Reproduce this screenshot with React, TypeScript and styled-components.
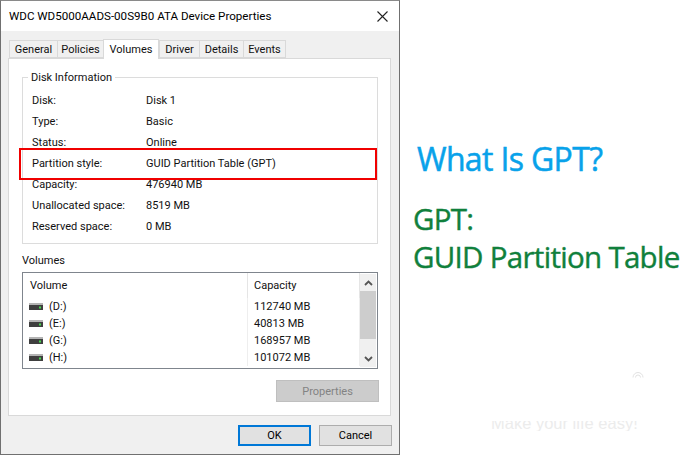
import React from "react";
import styled, { createGlobalStyle } from "styled-components";

const Global = createGlobalStyle`
  html, body {
    margin: 0;
    padding: 0;
    background: #fff;
    overflow: hidden;
  }
  * { box-sizing: border-box; }
`;

const Page = styled.div`
  width: 692px;
  height: 456px;
  display: flex;
  background: #fff;
  font-family: "Open Sans", "Noto Sans", sans-serif;
`;

// Dialog
const Dialog = styled.div`
  width: 400px;
  height: 455px;
  flex: none;
  display: flex;
  flex-direction: column;
  background: #f0f0f0;
  border: 1px solid #707070;
  border-top-color: #8a8a8a;
  color: #111;
  font-family: Roboto, "Noto Sans", sans-serif;
  font-size: 11px;
`;
const TitleBar = styled.div`
  height: 30px;
  flex: none;
  display: flex;
  align-items: center;
  justify-content: space-between;
  background: #fff;
  padding: 0 11px 0 8px;
  font-size: 11.6px;
  color: #000;
`;
const TabStrip = styled.div`
  height: 27px;
  flex: none;
  display: flex;
  align-items: flex-end;
  padding-left: 8px;
  position: relative;
  z-index: 1;
`;
const Tab = styled.div<{ $width: number; $active?: boolean }>`
  width: ${(p) => p.$width}px;
  height: ${(p) => (p.$active ? 20 : 18)}px;
  margin-bottom: ${(p) => (p.$active ? -1 : 0)}px;
  margin-right: ${(p) => (p.$active ? 0 : -1)}px;
  display: flex;
  align-items: center;
  justify-content: center;
  background: ${(p) => (p.$active ? "#fff" : "#f0f0f0")};
  border: 1px solid #d9d9d9;
  border-bottom: ${(p) => (p.$active ? "none" : "1px solid #d9d9d9")};
  padding-top: ${(p) => (p.$active ? 0 : 1)}px;
  padding-bottom: ${(p) => (p.$active ? 1 : 0)}px;
`;
const Panel = styled.div`
  height: 358px;
  flex: none;
  margin: 0 8px 0 7px;
  padding: 18px 12px 0 13px;
  background: #fff;
  border: 1px solid #d9d9d9;
`;
const GroupBox = styled.div`
  position: relative;
  height: 167px;
  padding: 12px 0 0 9px;
  border: 1px solid #dcdcdc;
`;
const Legend = styled.div`
  position: absolute;
  top: -7px;
  left: 5px;
  padding: 0 3px;
  background: #fff;
  line-height: 14px;
`;
const InfoRow = styled.div`
  height: 21px;
  display: grid;
  grid-template-columns: 114px 1fr;
  align-items: center;
`;
const Highlight = styled.div`
  position: absolute;
  left: -4px;
  top: 70px;
  width: 358px;
  height: 32px;
  border: 2px solid #f00000;
`;
const VolumesLabel = styled.div`
  margin-top: 9px;
  height: 16px;
  line-height: 16px;
`;
const ListBox = styled.div`
  height: 97px;
  margin-top: 3px;
  display: flex;
  background: #fff;
  border: 1px solid #7f858d;
`;
const ListBody = styled.div`
  flex: 1;
  min-width: 0;
`;
const ListHead = styled.div`
  height: 25px;
  display: grid;
  grid-template-columns: 224px 1fr;
  align-items: center;
`;
const HeadCell = styled.div<{ $divider?: boolean }>`
  height: 100%;
  display: flex;
  align-items: center;
  padding-left: ${(p) => (p.$divider ? 6 : 7)}px;
  padding-bottom: 1px;
  border-left: ${(p) => (p.$divider ? "1px solid #e5e5e5" : "none")};
  border-right: ${(p) => (p.$divider ? "1px solid #e5e5e5" : "none")};
`;
const ListRow = styled.div`
  height: 17px;
  display: grid;
  grid-template-columns: 224px 1fr;
  align-items: center;
`;
const VolumeCell = styled.div`
  display: flex;
  align-items: center;
  gap: 6px;
  padding-left: 6px;
`;
const CapacityCell = styled.div`
  height: 100%;
  display: flex;
  align-items: center;
  padding-left: 6px;
  border-left: 1px solid #eeeeee;
  border-right: 1px solid #eeeeee;
`;
const ScrollBar = styled.div`
  width: 16px;
  flex: none;
  margin: 1px 1px 1px 0;
  display: flex;
  flex-direction: column;
  background: #f0f0f0;
`;
const ScrollButton = styled.div`
  height: 17px;
  flex: none;
  display: flex;
  align-items: center;
  justify-content: center;
`;
const ScrollThumb = styled.div`
  height: 48px;
  flex: none;
  background: #cdcdcd;
`;
const ScrollTrack = styled.div`
  flex: 1;
`;
const ButtonRow = styled.div`
  display: flex;
  justify-content: flex-end;
`;
const PropertiesButton = styled.div`
  width: 103px;
  height: 22px;
  margin-top: 11px;
  margin-right: -1px;
  display: flex;
  align-items: center;
  justify-content: center;
  background: #cccccc;
  border: 1px solid #bfbfbf;
  color: #838383;
`;
const Footer = styled.div`
  flex: 1;
  display: flex;
  justify-content: flex-end;
  gap: 8px;
  padding: 9px 7px 0 0;
`;
const DialogButton = styled.div<{ $primary?: boolean }>`
  width: 73px;
  height: 21px;
  display: flex;
  align-items: center;
  justify-content: center;
  background: #e1e1e1;
  border: ${(p) => (p.$primary ? "2px solid #0078d7" : "1px solid #adadad")};
  color: #000;
`;

// Right side
const Side = styled.div`
  flex: 1;
  min-width: 0;
  display: flex;
  flex-direction: column;
  padding: 137px 0 0 13px;
  white-space: nowrap;
`;
const Heading = styled.div`
  margin-left: 4px;
  height: 44px;
  line-height: 44px;
  font-size: 32px;
  color: #08a2ea;
  letter-spacing: -0.65px;
  -webkit-text-stroke: 0.5px #08a2ea;
`;
const Subheading = styled.div`
  margin-top: 19px;
  font-size: 29.5px;
  line-height: 38px;
  color: #10803c;
  letter-spacing: -0.7px;
  -webkit-text-stroke: 0.4px #10803c;
`;
const Watermark = styled.div`
  position: relative;
  margin-top: 124px;
  height: 0;
`;
const MarkIcon = styled.svg`
  position: absolute;
  left: 219px;
  top: -30px;
`;
const FaintClip = styled.div`
  position: absolute;
  left: 78px;
  top: 21px;
  width: 150px;
  height: 10px;
  overflow: hidden;
`;
const FaintText = styled.div`
  margin-top: -7px;
  font-family: "Liberation Sans", sans-serif;
  font-size: 16.5px;
  line-height: 18px;
  color: #ececec;
`;

const CloseIcon = () => (
  <svg width="11" height="11" viewBox="0 0 11 11">
    <path d="M.5.5l10 10M10.5.5l-10 10" stroke="#222" strokeWidth="1.1" fill="none" />
  </svg>
);

const DriveIcon = () => (
  <svg width="14" height="7" viewBox="0 0 14 7">
    <rect x="0" y="0" width="14" height="2" fill="#b4b4b4" />
    <rect x="0" y="2" width="14" height="5" fill="#3f3f3f" />
    <rect x="10" y="3.5" width="2" height="2" fill="#47d94f" />
  </svg>
);

const Chevron = ({ up }: { up?: boolean }) => (
  <svg width="9" height="6" viewBox="0 0 9 6">
    <path
      d={up ? "M1 5l3.5-3.5L8 5" : "M1 1l3.5 3.5L8 1"}
      stroke="#555"
      strokeWidth="1.8"
      fill="none"
    />
  </svg>
);

const tabs = [
  { label: "General", width: 49 },
  { label: "Policies", width: 47 },
  { label: "Volumes", width: 56, active: true },
  { label: "Driver", width: 41 },
  { label: "Details", width: 45 },
  { label: "Events", width: 43 },
];

const info = [
  ["Disk:", "Disk 1"],
  ["Type:", "Basic"],
  ["Status:", "Online"],
  ["Partition style:", "GUID Partition Table (GPT)"],
  ["Capacity:", "476940 MB"],
  ["Unallocated space:", "8519 MB"],
  ["Reserved space:", "0 MB"],
];

const volumes = [
  ["(D:)", "112740 MB"],
  ["(E:)", "40813 MB"],
  ["(G:)", "168957 MB"],
  ["(H:)", "101072 MB"],
];

const App = () => {
  return (
    <Page>
      <Global />
      <Dialog>
        <TitleBar>
          <span>WDC WD5000AADS-00S9B0 ATA Device Properties</span>
          <CloseIcon />
        </TitleBar>
        <TabStrip>
          {tabs.map((t) => (
            <Tab key={t.label} $width={t.width} $active={t.active}>
              {t.label}
            </Tab>
          ))}
        </TabStrip>
        <Panel>
          <GroupBox>
            <Legend>Disk Information</Legend>
            {info.map(([k, v]) => (
              <InfoRow key={k}>
                <span>{k}</span>
                <span>{v}</span>
              </InfoRow>
            ))}
            <Highlight />
          </GroupBox>
          <VolumesLabel>Volumes</VolumesLabel>
          <ListBox>
            <ListBody>
              <ListHead>
                <HeadCell>Volume</HeadCell>
                <HeadCell $divider>Capacity</HeadCell>
              </ListHead>
              {volumes.map(([k, v]) => (
                <ListRow key={k}>
                  <VolumeCell>
                    <DriveIcon />
                    {k}
                  </VolumeCell>
                  <CapacityCell>{v}</CapacityCell>
                </ListRow>
              ))}
            </ListBody>
            <ScrollBar>
              <ScrollButton>
                <Chevron up />
              </ScrollButton>
              <ScrollThumb />
              <ScrollTrack />
              <ScrollButton>
                <Chevron />
              </ScrollButton>
            </ScrollBar>
          </ListBox>
          <ButtonRow>
            <PropertiesButton>Properties</PropertiesButton>
          </ButtonRow>
        </Panel>
        <Footer>
          <DialogButton $primary>OK</DialogButton>
          <DialogButton>Cancel</DialogButton>
        </Footer>
      </Dialog>
      <Side>
        <Heading>What Is GPT?</Heading>
        <Subheading>
          GPT:
          <br />
          GUID Partition Table
        </Subheading>
        <Watermark>
          <MarkIcon width="12" height="8" viewBox="0 0 12 8">
            <path d="M1 7.5a5 5 0 0 1 10 0M3.5 7.5a2.5 2.5 0 0 1 5 0" stroke="#e2e2e2" fill="none" />
          </MarkIcon>
          <FaintClip>
            <FaintText>Make your life easy!</FaintText>
          </FaintClip>
        </Watermark>
      </Side>
    </Page>
  );
};

export default App;
